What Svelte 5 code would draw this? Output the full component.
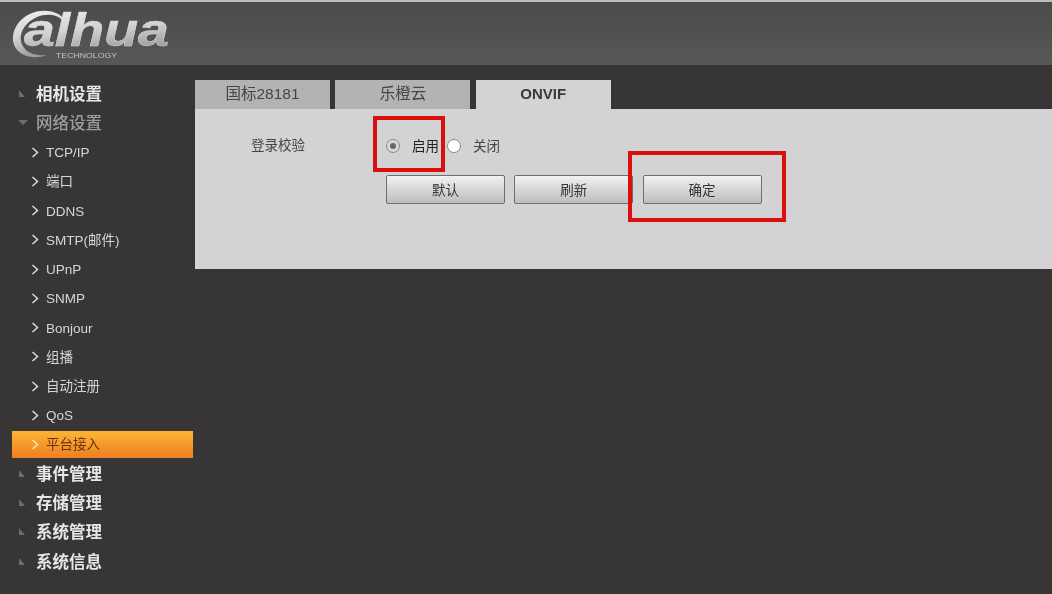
<script>
  const sub = ['TCP/IP', '端口', 'DDNS', 'SMTP(邮件)', 'UPnP', 'SNMP', 'Bonjour', '组播', '自动注册', 'QoS'];
  const after = ['事件管理', '存储管理', '系统管理', '系统信息'];
  const tabs = ['国标28181', '乐橙云', 'ONVIF'];
  const buttons = ['默认', '刷新', '确定'];
</script>

<div class="page">
  <header class="header">
    <svg class="logo" width="180" height="60" viewBox="0 0 180 60" aria-label="alhua">
      <defs>
        <linearGradient id="metal" x1="0" y1="0" x2="0.25" y2="1">
          <stop offset="0" stop-color="#f2f2f2" />
          <stop offset="0.55" stop-color="#d4d4d4" />
          <stop offset="1" stop-color="#9c9c9c" />
        </linearGradient>
      </defs>
      <path d="M56 11 C44 6 26 9 17 23 C8 37 14 53 32 55 C37 55.500 42 55 47 53 C38 54 29 52 25 47 C18 39 20 29 27 22 C35 14 46 11 56 14 C62 16 65 21 63 28 C67 21 64 14 56 11 Z" fill="url(#metal)" />
      <text class="mark" x="24" y="44" textLength="145" lengthAdjust="spacingAndGlyphs" fill="url(#metal)">alhua</text>
      <text class="tech" x="56" y="56" textLength="61" lengthAdjust="spacingAndGlyphs">TECHNOLOGY</text>
    </svg>
  </header>

  <div class="body">
    <nav class="side">
      <div class="top">
        <svg class="tri" width="10" height="10" viewBox="0 0 10 10"><path d="M2 1 L8 8 L2 8 Z" fill="#6d6d6d" /></svg>
        <span>相机设置</span>
      </div>
      <div class="top open">
        <svg class="tri" width="12" height="10" viewBox="0 0 12 10"><path d="M1 2 L11 2 L6 7 Z" fill="#6d6d6d" /></svg>
        <span>网络设置</span>
      </div>
      {#each sub as item}
        <div class="sub">
          <svg class="chev" width="8" height="11" viewBox="0 0 8 11"><path d="M1.5 1 L6.5 5.5 L1.5 10" fill="none" stroke="#dcdcdc" stroke-width="1.5" /></svg>
          <span class="sub-text">{item}</span>
        </div>
      {/each}
      <div class="sub active">
        <svg class="chev" width="8" height="11" viewBox="0 0 8 11"><path d="M1.5 1 L6.5 5.5 L1.5 10" fill="none" stroke="#ffe9b0" stroke-width="1.5" /></svg>
        <span>平台接入</span>
      </div>
      {#each after as item}
        <div class="top">
          <svg class="tri" width="10" height="10" viewBox="0 0 10 10"><path d="M2 1 L8 8 L2 8 Z" fill="#6d6d6d" /></svg>
          <span>{item}</span>
        </div>
      {/each}
    </nav>

    <main class="main">
      <div class="tabs">
        {#each tabs as tab, i}
          <div class="tab" class:current={i === 2}>{tab}</div>
        {/each}
      </div>
      <section class="panel">
        <div class="row">
          <span class="label">登录校验</span>
          <span class="radio on"><span class="dot"></span></span>
          <span class="opt first">启用</span>
          <span class="radio"></span>
          <span class="opt">关闭</span>
        </div>
        <div class="actions">
          {#each buttons as b}
            <button class="btn">{b}</button>
          {/each}
        </div>
        <div class="mark-box one"></div>
        <div class="mark-box two"></div>
      </section>
    </main>
  </div>
</div>

<style>
  :global(body) {
    margin: 0;
    background: #373535;
  }
  .page {
    width: 1052px;
    height: 594px;
    overflow: hidden;
    background: #373535;
    font-family: "Liberation Sans", "Noto Sans CJK SC", sans-serif;
    filter: blur(0.45px);
    display: flex;
    flex-direction: column;
  }
  .header {
    height: 63px;
    margin-top: 2px;
    flex: none;
    background: linear-gradient(#4b4b4b, #575757);
    box-shadow: 0 -2px 0 #bdbdbd;
  }
  .logo {
    display: block;
  }
  .mark {
    font: italic 700 46px "Liberation Sans", sans-serif;
    stroke: #d8d8d8;
    stroke-width: 0.5px;
  }
  .tech {
    font: 7.5px "Liberation Sans", sans-serif;
    fill: #c4c4c4;
  }
  .body {
    flex: 1;
    display: flex;
  }
  .side {
    width: 195px;
    flex: none;
    padding-top: 14px;
    padding-left: 12px;
    box-sizing: border-box;
  }
  .top,
  .sub {
    height: 29.25px;
    display: flex;
    align-items: center;
    box-sizing: border-box;
    line-height: 20px;
  }
  .top {
    padding-left: 5px;
    font-size: 16.5px;
    font-weight: 700;
    color: #e6e6e6;
  }
  .top .tri {
    width: 10px;
    margin-right: 9px;
  }
  .top.open {
    color: #9d9d9d;
    font-weight: 500;
  }
  .top.open .tri {
    width: 12px;
    margin-right: 7px;
  }
  .sub {
    padding-left: 19px;
    font-size: 13.5px;
    color: #d6d6d6;
    margin-right: 2px;
  }
  .sub-text {
    margin-top: 2px;
  }
  .chev {
    margin-right: 7px;
  }
  .sub.active {
    height: 27.5px;
    margin-top: 0.8px;
    margin-bottom: 0.9px;
    color: #6b3410;
    background: linear-gradient(#fdb436, #ee7f22);
  }
  .main {
    flex: 1;
    padding-top: 15px;
  }
  .tabs {
    display: flex;
    gap: 5.4px;
    height: 29px;
  }
  .tab {
    width: 135px;
    box-sizing: border-box;
    display: flex;
    align-items: center;
    justify-content: center;
    background: #b3b3b3;
    color: #454545;
    font-size: 15.5px;
    line-height: 20px;
    padding-bottom: 2px;
  }
  .tab.current {
    background: #d3d3d5;
    color: #3a3a3a;
    font-size: 15px;
    font-weight: 700;
  }
  .panel {
    position: relative;
    height: 160px;
    background: #d3d3d5;
    box-sizing: border-box;
    padding-top: 27px;
  }
  .row {
    display: flex;
    align-items: center;
    height: 20px;
    font-size: 13.5px;
    line-height: 20px;
    color: #444;
  }
  .label {
    width: 191px;
    padding-left: 56px;
    box-sizing: border-box;
  }
  .radio {
    width: 14px;
    height: 14px;
    box-sizing: border-box;
    border: 1px solid #8a8a8a;
    border-radius: 50%;
    background: #fff;
    display: flex;
    align-items: center;
    justify-content: center;
  }
  .radio.on {
    background: #d8d8d8;
  }
  .dot {
    width: 6px;
    height: 6px;
    border-radius: 50%;
    background: #666;
  }
  .opt {
    margin-left: 12px;
    margin-top: 2px;
  }
  .opt.first {
    width: 35px;
    color: #222;
  }
  .actions {
    display: flex;
    gap: 9.25px;
    margin-top: 19px;
    padding-left: 191px;
  }
  .btn {
    width: 119px;
    height: 29px;
    padding: 0 0 2px;
    border: 1px solid #6f6f6f;
    border-radius: 2px;
    background: linear-gradient(#f1f1f1, #bdbdbd);
    font: 13.5px/20px "Noto Sans CJK SC", sans-serif;
    color: #333;
  }
  .mark-box {
    position: absolute;
    box-sizing: border-box;
    border: 4px solid #dc0f0f;
  }
  .mark-box.one {
    left: 178px;
    top: 7px;
    width: 72px;
    height: 56px;
  }
  .mark-box.two {
    left: 433px;
    top: 42px;
    width: 158px;
    height: 71px;
  }
</style>
